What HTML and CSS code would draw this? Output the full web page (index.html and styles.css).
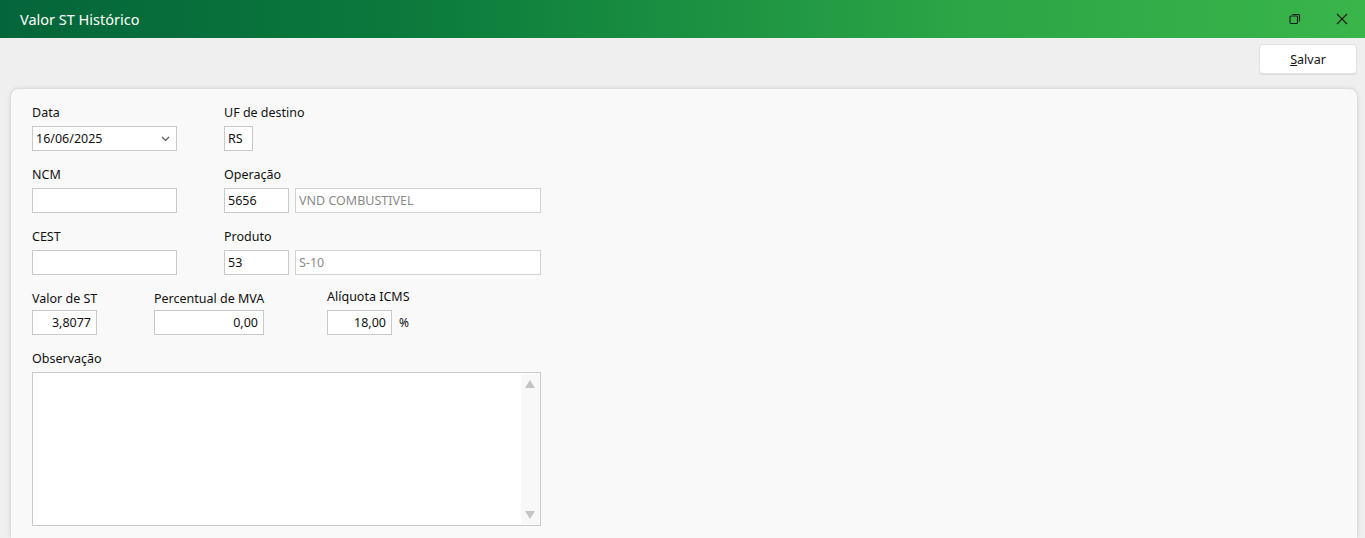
FILE: index.html
```html
<!DOCTYPE html>
<html lang="pt-BR">
<head>
<meta charset="utf-8">
<title>Valor ST Histórico</title>
<link rel="stylesheet" href="styles.css">
</head>
<body>
<header class="titlebar">
  <span class="title">Valor ST Histórico</span>
  <div class="win-buttons">
    <span class="win-btn">
      <svg width="12" height="12" viewBox="0 0 12 12"><rect x="1" y="3" width="7.5" height="7.5" rx="1" fill="none" stroke="#1b1b1b" stroke-width="1.1"/><path d="M3.5 1.5 H9.5 Q10.5 1.5 10.5 2.5 V8.5" fill="none" stroke="#1b1b1b" stroke-width="1.1"/></svg>
    </span>
    <span class="win-btn">
      <svg width="12" height="12" viewBox="0 0 12 12"><path d="M1 1 L11 11 M11 1 L1 11" stroke="#1b1b1b" stroke-width="1.1"/></svg>
    </span>
  </div>
</header>
<div class="toolbar">
  <button class="btn"><u>S</u>alvar</button>
</div>
<main class="card">
  <div class="row">
    <div class="field w-col1">
      <label>Data</label>
      <div class="input select"><span>16/06/2025</span>
        <svg width="9" height="6" viewBox="0 0 9 6"><path d="M1 1 L4.5 4.5 L8 1" fill="none" stroke="#555" stroke-width="1.2"/></svg>
      </div>
    </div>
    <div class="field">
      <label>UF de destino</label>
      <div class="input uf">RS</div>
    </div>
  </div>
  <div class="row">
    <div class="field w-col1">
      <label>NCM</label>
      <div class="input w145"></div>
    </div>
    <div class="field">
      <label>Operação</label>
      <div class="pair">
        <div class="input code">5656</div>
        <div class="input desc">VND COMBUSTIVEL</div>
      </div>
    </div>
  </div>
  <div class="row">
    <div class="field w-col1">
      <label>CEST</label>
      <div class="input w145"></div>
    </div>
    <div class="field">
      <label>Produto</label>
      <div class="pair">
        <div class="input code">53</div>
        <div class="input desc">S-10</div>
      </div>
    </div>
  </div>
  <div class="row row-values">
    <div class="field w-st">
      <label>Valor de ST</label>
      <div class="input num w65">3,8077</div>
    </div>
    <div class="field w-mva">
      <label>Percentual de MVA</label>
      <div class="input num w110">0,00</div>
    </div>
    <div class="field">
      <label class="raised">Alíquota ICMS</label>
      <div class="pct">
        <div class="input num w65">18,00</div>
        <span class="unit">%</span>
      </div>
    </div>
  </div>
  <div class="row">
    <div class="field">
      <label>Observação</label>
      <div class="textarea">
        <div class="scroll">
          <span class="tri up"></span>
          <span class="tri down"></span>
        </div>
      </div>
    </div>
  </div>
</main>
</body>
</html>
```

FILE: styles.css
```css
* { box-sizing: border-box; }
html, body { margin: 0; height: 100%; overflow: hidden; }
body {
  background: #efefef;
  font-family: "Noto Sans", "Open Sans", sans-serif;
  font-size: 12.5px;
  color: #111;
}
.titlebar {
  height: 38px;
  background: linear-gradient(to right, #04653a 0%, #0b7a3c 30%, #2ba546 70%, #39b54a 100%);
  display: flex;
  align-items: center;
  justify-content: space-between;
  padding-left: 20px;
}
.title {
  color: #fff;
  font-size: 14.5px;
  position: relative;
  top: 0;
}
.win-buttons { display: flex; height: 100%; }
.win-btn {
  width: 47px;
  display: flex;
  align-items: center;
  justify-content: center;
}
.toolbar {
  display: flex;
  justify-content: flex-end;
  padding: 6px 8px 15px;
}
.btn {
  width: 98px;
  height: 30px;
  background: #fff;
  border: 1px solid #e2e2e2;
  border-radius: 4px;
  box-shadow: 0 1px 1px rgba(0,0,0,0.08);
  font-family: inherit;
  font-size: 12.5px;
  color: #111;
  padding: 0;
}
.card {
  margin: 0 8px 0 11px;
  background: #f9f9f9;
  border-radius: 8px 8px 0 0;
  box-shadow: 0 0 4px rgba(0,0,0,0.18);
  padding: 15px 21px 0;
  height: 449px;
}
.row { display: flex; margin-bottom: 15px; }
.field { display: flex; flex-direction: column; }
.field label { height: 17px; line-height: 17px; margin-bottom: 5px; }
.row-values .field label { margin-bottom: 3px; }
.row-values .field label.raised { position: relative; top: -2px; }
.w-col1 { width: 192px; }
.w-st { width: 122px; }
.w-mva { width: 173px; }
.input {
  height: 25px;
  background: #fff;
  border: 1px solid #c9c9c9;
  line-height: 23px;
  padding: 0 3px;
  white-space: nowrap;
}
.select {
  width: 145px;
  display: flex;
  align-items: center;
  justify-content: space-between;
  padding-right: 6px;
}
.uf { width: 29px; }
.w145 { width: 145px; }
.pair { display: flex; gap: 6px; }
.code { width: 65px; }
.desc { width: 246px; color: #8a8a8a; border-color: #d2d2d2; }
.num { text-align: right; padding-right: 5px; }
.w65 { width: 65px; }
.w110 { width: 110px; }
.pct { display: flex; align-items: center; }
.unit { margin-left: 7px; font-size: 12px; }
.textarea {
  width: 509px;
  height: 154px;
  background: #fff;
  border: 1px solid #c9c9c9;
  display: flex;
  justify-content: flex-end;
  padding: 1px;
}
.scroll {
  width: 18px;
  background: #f8f8f8;
  display: flex;
  flex-direction: column;
  justify-content: space-between;
  align-items: center;
  padding: 6px 0 5px;
}
.tri { width: 0; height: 0; border-left: 5px solid transparent; border-right: 5px solid transparent; }
.tri.up { border-bottom: 8px solid #c4c4c4; }
.tri.down { border-top: 8px solid #c4c4c4; }
```
